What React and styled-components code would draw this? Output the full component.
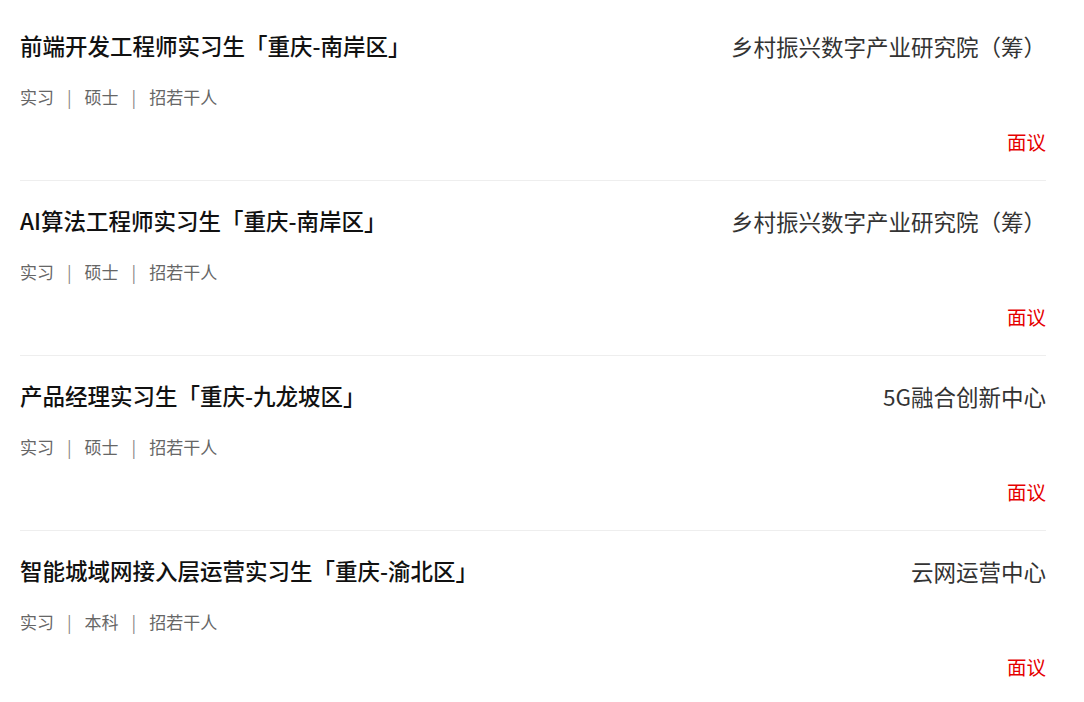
import React from "react";
import styled, { createGlobalStyle } from "styled-components";

const GlobalStyle = createGlobalStyle`
  html, body {
    margin: 0;
    padding: 0;
    background: #fff;
  }
  body {
    font-family: "Noto Sans CJK SC", "Noto Sans", sans-serif;
  }
`;

const List = styled.ul`
  list-style: none;
  margin: 0;
  padding: 6px 38px 0 20px;
`;

const Item = styled.li`
  padding: 24px 0 26px;
  border-bottom: 1px solid #eeeeee;

  &:last-child {
    border-bottom: none;
  }
`;

const TopRow = styled.div`
  display: flex;
  justify-content: space-between;
  align-items: flex-start;
  height: 30px;
`;

const Title = styled.h3`
  margin: 0;
  font-size: 22.5px;
  line-height: 30px;
  font-weight: 500;
  color: #111;
`;

const Company = styled.span`
  font-size: 22.5px;
  line-height: 33px;
  color: #333;
`;

const Meta = styled.div`
  margin-top: 26px;
  display: flex;
  align-items: center;
  font-size: 17px;
  line-height: 22px;
  color: #666;
`;

const Sep = styled.span`
  margin: 0 13px;
  color: #888;
`;

const Salary = styled.div`
  margin-top: 22px;
  text-align: right;
  font-size: 19.5px;
  line-height: 24px;
  color: #e60000;
`;

const jobs = [
  {
    title: "前端开发工程师实习生「重庆-南岸区」",
    company: "乡村振兴数字产业研究院（筹）",
    tags: ["实习", "硕士", "招若干人"]
  },
  {
    title: "AI算法工程师实习生「重庆-南岸区」",
    company: "乡村振兴数字产业研究院（筹）",
    tags: ["实习", "硕士", "招若干人"]
  },
  {
    title: "产品经理实习生「重庆-九龙坡区」",
    company: "5G融合创新中心",
    tags: ["实习", "硕士", "招若干人"]
  },
  {
    title: "智能城域网接入层运营实习生「重庆-渝北区」",
    company: "云网运营中心",
    tags: ["实习", "本科", "招若干人"]
  }
];

const JobItem = ({ title, company, tags }) => (
  <Item>
    <TopRow>
      <Title>{title}</Title>
      <Company>{company}</Company>
    </TopRow>
    <Meta>
      {tags.map((tag, i) => (
        <React.Fragment key={tag}>
          {i > 0 && <Sep>|</Sep>}
          <span>{tag}</span>
        </React.Fragment>
      ))}
    </Meta>
    <Salary>面议</Salary>
  </Item>
);

export default function App() {
  return (
    <>
      <GlobalStyle />
      <List>
        {jobs.map((job) => (
          <JobItem key={job.title} {...job} />
        ))}
      </List>
    </>
  );
}
